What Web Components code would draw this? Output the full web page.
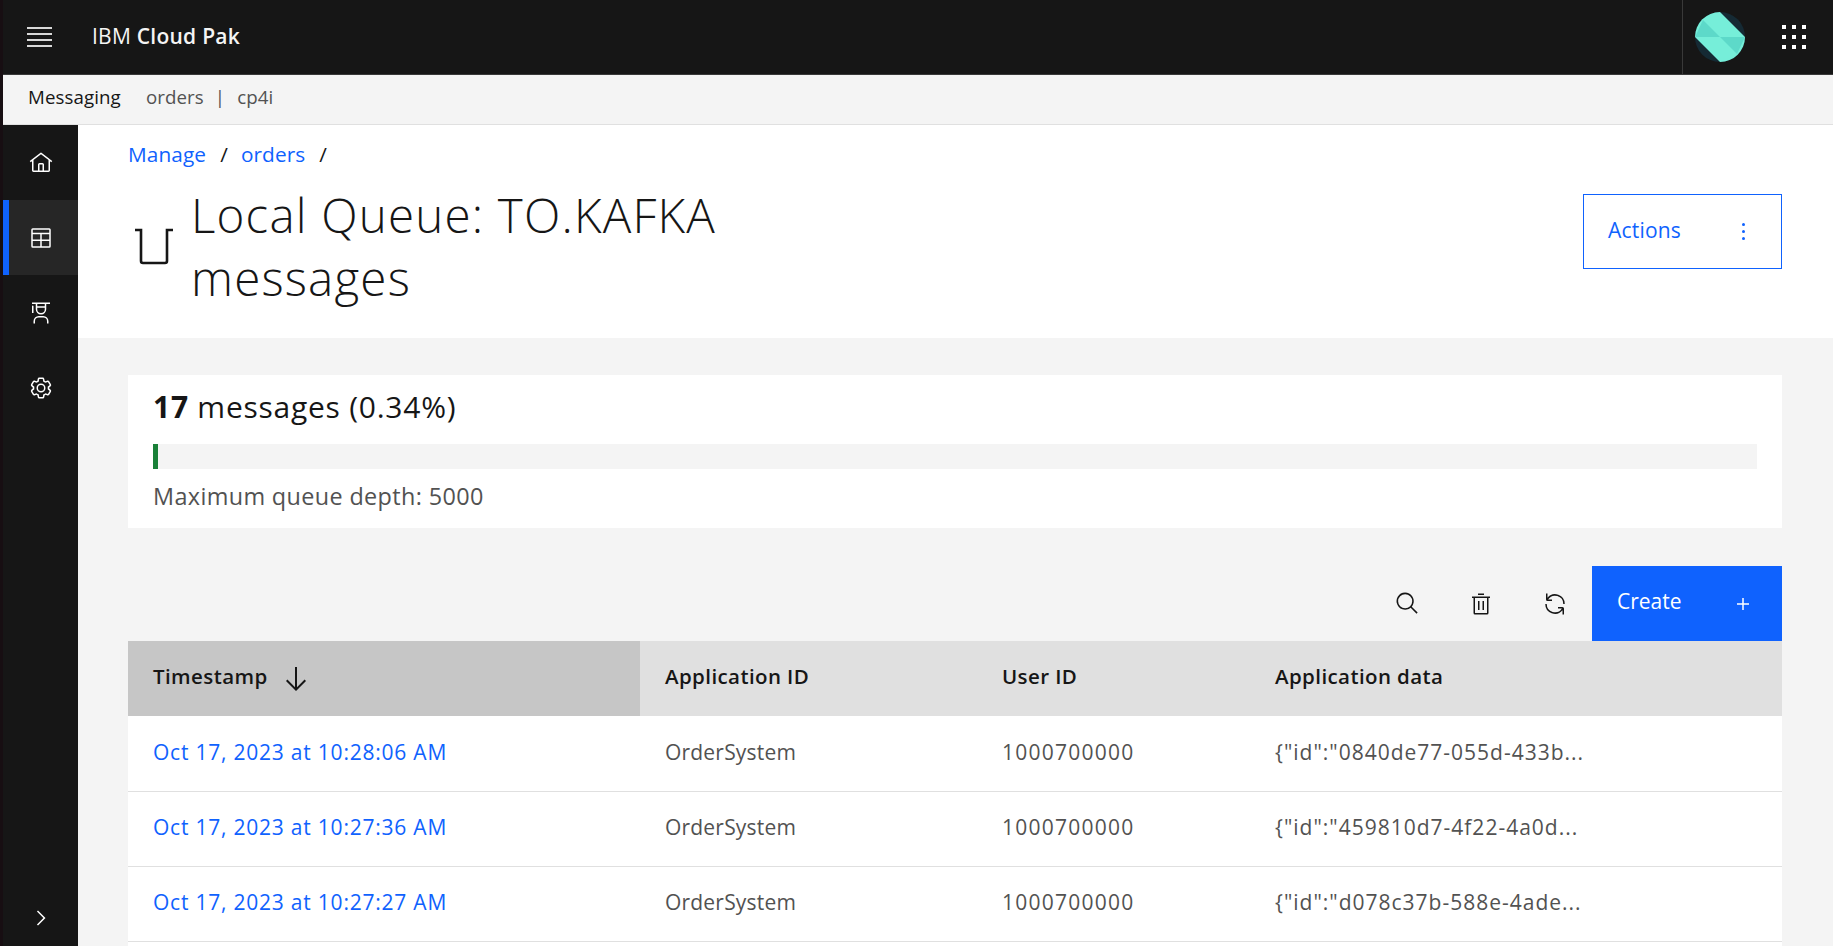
<!DOCTYPE html>
<html lang="en">
<head>
<meta charset="utf-8">
<title>Local Queue: TO.KAFKA messages</title>
<style>
   html, body { margin: 0; height: 100%; overflow: hidden; background: #f4f4f4; }
   body { font-family: "Open Sans", Roboto, "Liberation Sans", sans-serif; color: #161616; }
</style>
</head>
<body>

<cp-shell>
   <cp-header slot="header" brand="IBM" product="Cloud Pak"></cp-header>
   <cp-subbar slot="header" app="Messaging" context="orders" namespace="cp4i"></cp-subbar>
   <cp-sidenav slot="nav">
      <cp-nav-item icon="home"></cp-nav-item>
      <cp-nav-item icon="table" active></cp-nav-item>
      <cp-nav-item icon="education"></cp-nav-item>
      <cp-nav-item icon="settings"></cp-nav-item>
   </cp-sidenav>

   <cp-page-head>
      <a slot="crumb" href="#">Manage</a>
      <a slot="crumb" href="#">orders</a>
      <span slot="title">Local Queue: TO.KAFKA<br>messages</span>
   </cp-page-head>

   <cp-content>
      <cp-depth-card depth="17" max="5000" percent="0.34"></cp-depth-card>
      <cp-toolbar></cp-toolbar>
      <cp-table>
         <cp-row stamp="Oct 17, 2023 at 10:28:06 AM" app="OrderSystem" user="1000700000" data='{"id":"0840de77-055d-433b...'></cp-row>
         <cp-row stamp="Oct 17, 2023 at 10:27:36 AM" app="OrderSystem" user="1000700000" data='{"id":"459810d7-4f22-4a0d...'></cp-row>
         <cp-row stamp="Oct 17, 2023 at 10:27:27 AM" app="OrderSystem" user="1000700000" data='{"id":"d078c37b-588e-4ade...'></cp-row>
      </cp-table>
   </cp-content>
</cp-shell>

<script>
// carbon icon paths, all on a 32 grid
const ICONS = {
   home: "M16.6123,2.2138a1.01,1.01,0,0,0-1.2427,0L1,13.4194l1.2427,1.5717L4,13.6209V26a2.0041,2.0041,0,0,0,2,2H26a2.0037,2.0037,0,0,0,2-2V13.63L29.7573,15,31,13.4282ZM18,26H14V18h4Zm2,0V18a2.0023,2.0023,0,0,0-2-2H14a2.002,2.002,0,0,0-2,2v8H6V12.0615l10-7.79,10,7.8005V26Z",
   table: "M27,3H5A2,2,0,0,0,3,5V27a2,2,0,0,0,2,2H27a2,2,0,0,0,2-2V5A2,2,0,0,0,27,3Zm0,2V9H5V5ZM17,11H27v7H17Zm-2,7H5V11H15ZM5,20H15v7H5Zm12,7V20H27v7Z",
   education: "M26,30H24V27a5.0059,5.0059,0,0,0-5-5H13a5.0059,5.0059,0,0,0-5,5v3H6V27a7.0082,7.0082,0,0,1,7-7h6a7.0082,7.0082,0,0,1,7,7Z M5,6A1,1,0,0,0,4,7v9H6V7A1,1,0,0,0,5,6Z M4,2V4H9v7a7,7,0,0,0,14,0V4h5V2Zm7,2H21V7H11Zm5,12a5,5,0,0,1-5-5V9H21v2A5,5,0,0,1,16,16Z",
   settings: "M27,16.76c0-.25,0-.5,0-.76s0-.51,0-.77l1.92-1.68A2,2,0,0,0,29.3,11L26.94,7a2,2,0,0,0-1.73-1,2,2,0,0,0-.64.1l-2.43.82a11.35,11.35,0,0,0-1.31-.75l-.51-2.52a2,2,0,0,0-2-1.61H13.64a2,2,0,0,0-2,1.61l-.51,2.52a11.48,11.48,0,0,0-1.32.75L7.43,6.06A2,2,0,0,0,6.79,6,2,2,0,0,0,5.06,7L2.7,11a2,2,0,0,0,.41,2.51L5,15.24c0,.25,0,.5,0,.76s0,.51,0,.77L3.11,18.45A2,2,0,0,0,2.7,21L5.06,25a2,2,0,0,0,1.73,1,2,2,0,0,0,.64-.1l2.43-.82a11.35,11.35,0,0,0,1.31.75l.51,2.52a2,2,0,0,0,2,1.61h4.72a2,2,0,0,0,2-1.61l.51-2.52a11.48,11.48,0,0,0,1.32-.75l2.42.82a2,2,0,0,0,.64.1,2,2,0,0,0,1.73-1L29.3,21a2,2,0,0,0-.41-2.51ZM25.21,24l-3.43-1.16a8.86,8.86,0,0,1-2.71,1.57L18.36,28H13.64l-.71-3.55a9.36,9.36,0,0,1-2.7-1.57L6.79,24,4.43,20l2.72-2.4a8.9,8.9,0,0,1,0-3.13L4.43,12,6.79,8l3.43,1.16a8.86,8.86,0,0,1,2.71-1.57L13.64,4h4.72l.71,3.55a9.36,9.36,0,0,1,2.7,1.57L25.21,8,27.57,12l-2.72,2.4a8.9,8.9,0,0,1,0,3.13L27.57,20Z M16,22a6,6,0,1,1,6-6A5.94,5.94,0,0,1,16,22Zm0-10a3.91,3.91,0,0,0-4,4,3.91,3.91,0,0,0,4,4,3.91,3.91,0,0,0,4-4A3.91,3.91,0,0,0,16,12Z",
   chevron: "M22 16L12 26 10.6 24.6 19.2 16 10.6 7.4 12 6z",
   search: "M29,27.5859l-7.5521-7.5521a11.0177,11.0177,0,1,0-1.4141,1.4141L27.5859,29ZM4,13a9,9,0,1,1,9,9A9.01,9.01,0,0,1,4,13Z",
   trash: "M12 12H14V24H12zM18 12H20V24H18zM4 6V8H6V28a2 2 0 002 2H24a2 2 0 002-2V8h2V6zM8 28V8H24V28zM12 2H20V4H12z",
   renew: "M12 10H6.78A11 11 0 0127 16h2A13 13 0 006 7.68V2H4v8a2 2 0 002 2h6zM20 22h5.22A11 11 0 015 16H3a13 13 0 0023 8.32V30h2V22a2 2 0 00-2-2H20z",
   add: "M17 15V8h-2v7H8v2h7v7h2v-7h7v-2z",
   arrowDown: "M24.59 16.59L17 24.17 17 4 15 4 15 24.17 7.41 16.59 6 18 16 28 26 18 24.59 16.59z",
};

class CpIcon extends HTMLElement {
   connectedCallback() {
      const size = this.getAttribute("size") || 24;
      this.attachShadow({ mode: "open" }).innerHTML = `
         <style>
            :host { display: inline-flex; flex: none; width: ${size}px; height: ${size}px; }
            svg { display: block; width: 100%; height: 100%; fill: currentColor; }
         </style>
         <svg viewBox="0 0 32 32" aria-hidden="true"><path d="${ICONS[this.getAttribute("name")]}"></path></svg>`;
   }
}

class CpShell extends HTMLElement {
   constructor() {
      super();
      this.attachShadow({ mode: "open" }).innerHTML = `
         <style>
            :host {
               display: grid;
               grid-template-columns: 75px 1fr;
               grid-template-rows: auto 1fr;
               height: 100vh;
               border-left: 3px solid #170e12;
               box-sizing: border-box;
            }
            .top { grid-column: 1 / -1; }
            .nav { display: flex; min-height: 0; }
            main { display: flex; flex-direction: column; min-width: 0; min-height: 0; }
         </style>
         <div class="top"><slot name="header"></slot></div>
         <div class="nav"><slot name="nav"></slot></div>
         <main><slot></slot></main>`;
   }
}

class CpHeader extends HTMLElement {
   connectedCallback() {
      this.attachShadow({ mode: "open" }).innerHTML = `
         <style>
            :host {
               display: flex;
               align-items: center;
               height: 75px;
               box-sizing: border-box;
               background: #161616;
               border-bottom: 1px solid #393939;
               color: #f4f4f4;
            }
            .menu { display: flex; flex-direction: column; gap: 3.8px; width: 25px; margin-left: 24px; }
            .menu i { display: block; height: 2px; background: #d8d8d8; }
            .name { margin-left: 40px; font-size: 21px; letter-spacing: .25px; line-height: 24px; margin-bottom: 3px; }
            .name b { font-weight: 600; }
            .end { margin-left: auto; display: flex; align-items: center; height: 100%; }
            .avatar { display: flex; align-items: center; height: 100%; padding: 0 12px; border-left: 1px solid #393939; }
            .avatar svg { display: block; width: 50px; height: 50px; }
            .apps { display: grid; grid-template-columns: repeat(3, 4px); gap: 6px; padding: 0 27px 0 25px; }
            .apps i { display: block; height: 4px; background: #fff; }
         </style>
         <div class="menu"><i></i><i></i><i></i><i></i></div>
         <div class="name">${this.getAttribute("brand")} <b>${this.getAttribute("product")}</b></div>
         <div class="end">
            <div class="avatar">
               <svg viewBox="0 0 50 50" aria-hidden="true">
                  <clipPath id="disc"><circle cx="25" cy="25" r="25"></circle></clipPath>
                  <g clip-path="url(#disc)">
                     <rect width="50" height="50" fill="#152a34"></rect>
                     <polygon points="-10,-10 25,0 50,25 60,60 25,50 0,25" fill="#76eed9"></polygon>
                     <polygon points="8,8 25,25 0,25" fill="#5dd9c9"></polygon>
                     <polygon points="25,25 50,25 42,42" fill="#5dd9c9"></polygon>
                  </g>
               </svg>
            </div>
            <div class="apps"><i></i><i></i><i></i><i></i><i></i><i></i><i></i><i></i><i></i></div>
         </div>`;
   }
}

class CpSubbar extends HTMLElement {
   connectedCallback() {
      this.attachShadow({ mode: "open" }).innerHTML = `
         <style>
            :host {
               display: flex;
               align-items: center;
               height: 50px;
               box-sizing: border-box;
               padding: 0 0 7px 25px;
               background: #f4f4f4;
               border-bottom: 1px solid #e0e0e0;
               font-size: 18.7px;
               letter-spacing: .1px;
               color: #525252;
            }
            .app { color: #161616; margin-right: 25px; }
            .sep { margin: 0 12px 0 11px; }
         </style>
         <span class="app">${this.getAttribute("app")}</span>
         <span>${this.getAttribute("context")}</span><span class="sep">|</span><span>${this.getAttribute("namespace")}</span>`;
   }
}

class CpSidenav extends HTMLElement {
   constructor() {
      super();
      this.attachShadow({ mode: "open" }).innerHTML = `
         <style>
            :host {
               display: flex;
               flex-direction: column;
               width: 75px;
               background: #161616;
               color: #fff;
            }
            .expand { margin-top: auto; display: flex; justify-content: center; align-items: center; height: 57px; }
         </style>
         <slot></slot>
         <div class="expand"><cp-icon name="chevron"></cp-icon></div>`;
   }
}

class CpNavItem extends HTMLElement {
   connectedCallback() {
      this.attachShadow({ mode: "open" }).innerHTML = `
         <style>
            :host {
               display: flex;
               align-items: center;
               justify-content: center;
               height: 75px;
               box-sizing: border-box;
               color: #fff;
            }
            :host([active]) { background: #262626; border-left: 6px solid #0f62fe; padding-right: 6px; }
         </style>
         <cp-icon name="${this.getAttribute("icon")}"></cp-icon>`;
   }
}

class CpPageHead extends HTMLElement {
   constructor() {
      super();
      this.attachShadow({ mode: "open" }).innerHTML = `
         <style>
            :host {
               display: block;
               flex: none;
               height: 213px;
               box-sizing: border-box;
               padding: 15px 51px 0 50px;
               background: #fff;
            }
            nav { display: flex; align-items: center; height: 28px; font-size: 20.8px; letter-spacing: .1px; color: #161616; }
            ::slotted(a) { color: #0f62fe; text-decoration: none; }
            ::slotted(a)::after { content: "/"; color: #161616; margin: 0 13px 0 14px; }
            .row { display: flex; align-items: flex-start; justify-content: space-between; margin-top: 11px; }
            .title { display: flex; align-items: flex-start; padding-top: 4px; }
            .glyph { display: block; flex: none; width: 40px; height: 40px; margin: 44px 17px 0 6px; fill: none; stroke: #161616; stroke-width: 2.6; }
            h1 { margin: 0; font-size: 47.5px; letter-spacing: 1.2px; line-height: 63px; font-weight: 300; color: #161616; }
            button {
               display: flex;
               align-items: center;
               justify-content: space-between;
               width: 199px;
               height: 75px;
               margin-top: 15px;
               padding: 0 36px 3px 24px;
               box-sizing: border-box;
               background: #fff;
               border: 1px solid #0f62fe;
               color: #0f62fe;
               font: inherit;
               font-size: 21px;
               letter-spacing: .2px;
            }
            .dots { display: flex; flex-direction: column; gap: 3.6px; margin-top: 3px; }
            .dots i { display: block; width: 3px; height: 3px; border-radius: 50%; background: #0f62fe; }
         </style>
         <nav><slot name="crumb"></slot></nav>
         <div class="row">
            <div class="title">
               <svg class="glyph" viewBox="0 0 40 40" aria-hidden="true"><path d="M1 3H7V34a2 2 0 0 0 2 2H31a2 2 0 0 0 2-2V3H39"></path></svg>
               <h1><slot name="title"></slot></h1>
            </div>
            <button type="button">Actions<span class="dots"><i></i><i></i><i></i></span></button>
         </div>`;
   }
}

class CpContent extends HTMLElement {
   constructor() {
      super();
      this.attachShadow({ mode: "open" }).innerHTML = `
         <style>
            :host {
               display: flex;
               flex-direction: column;
               flex: 1;
               min-height: 0;
               padding: 37px 51px 0 50px;
            }
         </style>
         <slot></slot>`;
   }
}

class CpDepthCard extends HTMLElement {
   connectedCallback() {
      this.attachShadow({ mode: "open" }).innerHTML = `
         <style>
            :host {
               display: block;
               height: 153px;
               box-sizing: border-box;
               padding: 13px 25px 0;
               background: #fff;
            }
            .count { font-size: 30px; letter-spacing: .75px; line-height: 38px; color: #161616; }
            .count b { font-weight: 700; }
            .bar { height: 25px; margin-top: 18px; background: #f4f4f4; }
            .fill { width: 5px; height: 100%; background: #198038; }
            .max { margin-top: 11px; font-size: 23.4px; letter-spacing: .37px; line-height: 32px; color: #525252; }
         </style>
         <div class="count"><b>${this.getAttribute("depth")}</b> messages (${this.getAttribute("percent")}%)</div>
         <div class="bar"><div class="fill"></div></div>
         <div class="max">Maximum queue depth: ${this.getAttribute("max")}</div>`;
   }
}

class CpToolbar extends HTMLElement {
   connectedCallback() {
      this.attachShadow({ mode: "open" }).innerHTML = `
         <style>
            :host { display: flex; justify-content: flex-end; height: 75px; margin-top: 38px; }
            .tool { display: flex; align-items: center; justify-content: center; width: 74px; color: #161616; }
            button {
               display: flex;
               align-items: center;
               justify-content: space-between;
               width: 190px;
               padding: 0 27px 5px 25px;
               box-sizing: border-box;
               border: 0;
               background: #0f62fe;
               color: #fff;
               font: inherit;
               font-size: 21px;
            }
            button cp-icon { margin-top: 6px; }
         </style>
         <span class="tool"><cp-icon name="search" size="25"></cp-icon></span>
         <span class="tool"><cp-icon name="trash"></cp-icon></span>
         <span class="tool"><cp-icon name="renew"></cp-icon></span>
         <button type="button">Create<cp-icon name="add"></cp-icon></button>`;
   }
}

const COLUMNS = "512px 337px 273px 1fr";

class CpTable extends HTMLElement {
   constructor() {
      super();
      this.attachShadow({ mode: "open" }).innerHTML = `
         <style>
            :host { display: flex; flex-direction: column; flex: 1; background: #fff; }
            .head {
               display: grid;
               grid-template-columns: ${COLUMNS};
               height: 75px;
               background: #e0e0e0;
               font-size: 20.5px;
               letter-spacing: .4px;
               font-weight: 600;
               color: #161616;
            }
            .head div { display: flex; align-items: center; padding: 0 0 5px 25px; }
            .head .sorted { background: #c6c6c6; }
            .sorted cp-icon { margin-left: 12px; margin-top: 6px; }
            .rows { padding-top: 1px; }
         </style>
         <div class="head">
            <div class="sorted">Timestamp<cp-icon name="arrowDown" size="32"></cp-icon></div>
            <div>Application ID</div>
            <div>User ID</div>
            <div>Application data</div>
         </div>
         <div class="rows"><slot></slot></div>`;
   }
}

class CpRow extends HTMLElement {
   connectedCallback() {
      const root = this.attachShadow({ mode: "open" });
      root.innerHTML = `
         <style>
            :host {
               display: grid;
               grid-template-columns: ${COLUMNS};
               height: 75px;
               box-sizing: border-box;
               border-bottom: 1px solid #e0e0e0;
               font-size: 21px;
               color: #525252;
            }
            div { display: flex; align-items: center; padding: 0 0 4px 25px; }
            a { color: #0f62fe; text-decoration: none; letter-spacing: .78px; }
            .app { letter-spacing: .2px; }
            .user { letter-spacing: 1.25px; }
            .data { letter-spacing: 1px; }
         </style>
         <div><a href="#"></a></div><div class="app"></div><div class="user"></div><div class="data"></div>`;
      root.querySelector("a").textContent = this.getAttribute("stamp");
      root.querySelector(".app").textContent = this.getAttribute("app");
      root.querySelector(".user").textContent = this.getAttribute("user");
      root.querySelector(".data").textContent = this.getAttribute("data");
   }
}

customElements.define("cp-icon", CpIcon);
customElements.define("cp-shell", CpShell);
customElements.define("cp-header", CpHeader);
customElements.define("cp-subbar", CpSubbar);
customElements.define("cp-sidenav", CpSidenav);
customElements.define("cp-nav-item", CpNavItem);
customElements.define("cp-page-head", CpPageHead);
customElements.define("cp-content", CpContent);
customElements.define("cp-depth-card", CpDepthCard);
customElements.define("cp-toolbar", CpToolbar);
customElements.define("cp-table", CpTable);
customElements.define("cp-row", CpRow);
</script>
</body>
</html>
